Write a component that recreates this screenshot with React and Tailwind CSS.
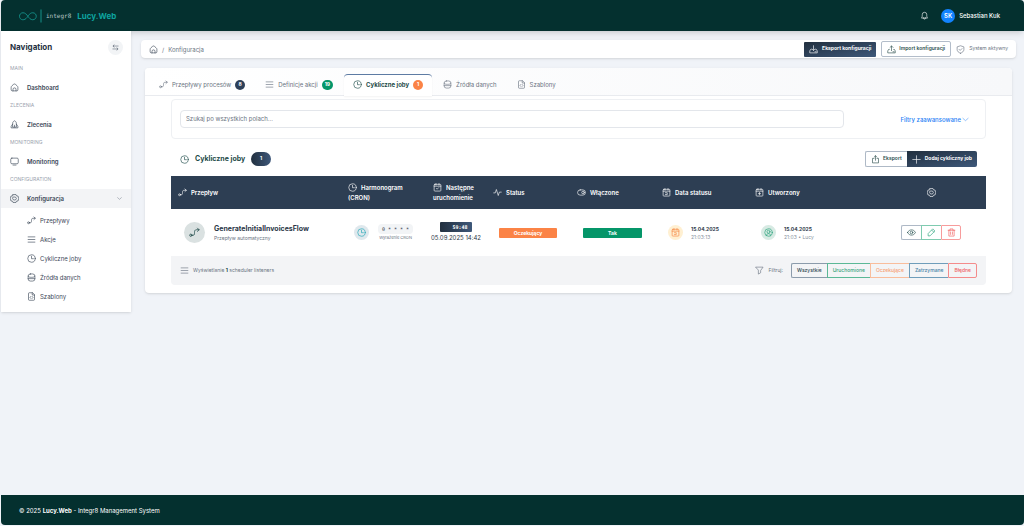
import { useState } from 'react';

const ICONS = {
  home: (
    <>
      <path d="M3 11.5C3 9.5 4 8.4 5.4 7.2l4.4-3.8c1.4-1.1 3-1.1 4.4 0l4.4 3.8C20 8.4 21 9.500 21 11.500V18a3 3 0 0 1-3 3H6a3 3 0 0 1-3-3z" />
      <path d="M8 21v-4a4 4 0 0 1 8 0v4" />
    </>
  ),
  flow: (
    <>
      <circle cx="4" cy="18" r="2.500" />
      <path d="M6.500 18H9c3 0 3-2.500 3-6s1-6 4-6h6" />
      <path d="M18.500 2.500 22 6l-3.500 3.500" />
    </>
  ),
  rocket: (
    <>
      <path d="M7 18V9c0-3 2-5.500 5-7 3 1.500 5 4 5 7v9z" />
      <path d="M7 11l-4 6v4h18v-4l-4-6M12 14v4" />
    </>
  ),
  monitor: (
    <>
      <rect x="2" y="3" width="20" height="15" rx="3" />
      <path d="M8 21.500h8" />
    </>
  ),
  gear: (
    <>
      <path d="M8 1.500h8l1.500 3.500 4 .5L23 12l-1.500 6.500-4 .5L16 22.500H8L6.500 19l-4-.5L1 12l1.500-6.500 4-.5z" />
      <path d="m9.500 8h5l2.500 4-2.500 4h-5L7 12z" />
    </>
  ),
  menu: <path d="M3 5h18M3 12h18M3 19h18" />,
  clock: (
    <>
      <circle cx="12" cy="12" r="10" />
      <path d="M12 6v6.500h5" />
    </>
  ),
  database: (
    <>
      <rect x="3" y="2.500" width="18" height="19" rx="6" />
      <path d="M3 8.500c1 2.500 4 3 9 3s8-.5 9-3M3 15h18" />
    </>
  ),
  file: (
    <>
      <path d="M14 2H6a2 2 0 0 0-2 2v16a2 2 0 0 0 2 2h12a2 2 0 0 0 2-2V8z" />
      <path d="M14 2v6h6M10 12l-2 2.500 2 2.500M14 12l2 2.500-2 2.500" />
    </>
  ),
  chevron: <path d="m3 8 9 8 9-8" />,
  swap: <path d="M7 3 4 7l3 4M4 7h17M17 13l3 4-3 4M20 17H3" />,
  bell: (
    <>
      <path d="M4.500 18C6 16 6 14 6 9.500a6 6 0 0 1 12 0c0 4.500 0 6.500 1.500 8.500z" />
      <path d="M9.500 18v1a2.500 2.500 0 0 0 5 0v-1" />
    </>
  ),
  download: (
    <>
      <path d="M12 2v12M8 10.500l4 4 4-4" />
      <path d="M6 12H4l-2 4v5h20v-5l-2-4h-2M16 18h3" />
    </>
  ),
  upload: (
    <>
      <path d="M12 15V3M8 6.500l4-4 4 4" />
      <path d="M6 12H4l-2 4v5h20v-5l-2-4h-2M16 18h3" />
    </>
  ),
  share: (
    <>
      <path d="M12 14V2M8.500 5.500l3.500-3.500 3.500 3.500" />
      <path d="M8 9H4v12h16V9h-4" />
    </>
  ),
  shield: (
    <>
      <path d="M12 22c5-2 9-5 9-10V5l-9-3-9 3v7c0 5 4 8 9 10z" />
      <path d="m8 11.500 3 3 5-5" />
    </>
  ),
  calendar: (
    <>
      <rect x="3" y="3.500" width="18" height="18" rx="2" />
      <path d="M3 8.500h18M8 1.500v4M16 1.500v4M9 14.500l2 2 4-4" />
    </>
  ),
  calendarDay: (
    <>
      <rect x="3" y="3.500" width="18" height="18" rx="2" />
      <path d="M3 8.500h18M8 1.500v4M16 1.500v4M9 12.500h5v5H9" />
    </>
  ),
  calendarAdd: (
    <>
      <rect x="3" y="3.500" width="18" height="18" rx="2" />
      <path d="M3 8.500h18M8 1.500v4M16 1.500v4M12 12v6M9 15h6" />
    </>
  ),
  pulse: <path d="M2 13h4l3-9 5 16 3-9h5" />,
  toggle: (
    <>
      <rect x="1.500" y="5" width="21" height="14" rx="7" />
      <circle cx="16" cy="12" r="3.500" />
    </>
  ),
  user: (
    <>
      <circle cx="12" cy="12" r="10" />
      <circle cx="12" cy="10" r="4" />
      <path d="M7 20v-1c0-2.500 2-4 5-4s5 1.500 5 4v1" />
    </>
  ),
  eye: (
    <>
      <path d="M1.500 12C4 7 8 5 12 5s8 2 10.500 7C20 17 16 19 12 19S4 17 1.500 12z" />
      <circle cx="12" cy="12" r="3.500" />
    </>
  ),
  pencil: <path d="m16 3 5 5L8 21H3v-5zM13 6l5 5" />,
  trash: <path d="M3 6h18M8 6V2.500h8V6M5 6v15.500h14V6M9.500 10.500v6.500M14.500 10.500v6.500" />,
  funnel: <path d="M2.500 3h19L15 12v6l-6 3.500V12z" />,
  plus: <path d="M12 2v20M2 12h20" />,
};

function Icon({ name, className = 'size-[9px]' }) {
  return (
    <svg
      viewBox="0 0 24 24"
      fill="none"
      stroke="currentColor"
      strokeWidth="1.700"
      strokeLinecap="round"
      strokeLinejoin="round"
      className={`shrink-0 ${className}`}
      aria-hidden="true"
    >
      {ICONS[name]}
    </svg>
  );
}

const NAV = [
  { section: 'MAIN', icon: 'home', label: 'Dashboard' },
  { section: 'ZLECENIA', icon: 'rocket', label: 'Zlecenia' },
  { section: 'MONITORING', icon: 'monitor', label: 'Monitoring' },
  { section: 'CONFIGURATION', icon: 'gear', label: 'Konfiguracja', open: true },
];

const SUBNAV = [
  { icon: 'flow', label: 'Przepływy' },
  { icon: 'menu', label: 'Akcje' },
  { icon: 'clock', label: 'Cykliczne joby' },
  { icon: 'database', label: 'Źródła danych' },
  { icon: 'file', label: 'Szablony' },
];

const TABS = [
  { icon: 'flow', label: 'Przepływy procesów', count: 8, badge: 'bg-[#2d4059]' },
  { icon: 'menu', label: 'Definicje akcji', count: 19, badge: 'bg-[#059669]' },
  { icon: 'clock', label: 'Cykliczne joby', count: 1, badge: 'bg-[#fb8346]' },
  { icon: 'database', label: 'Źródła danych' },
  { icon: 'file', label: 'Szablony' },
];

const COLUMNS = [
  { icon: 'flow', label: 'Przepływ', width: 'w-[170px]' },
  { icon: 'clock', label: 'Harmonogram (CRON)', width: 'w-[85px]' },
  { icon: 'calendar', label: 'Następne uruchomienie', width: 'w-[60px]' },
  { icon: 'pulse', label: 'Status', width: 'w-[84px]' },
  { icon: 'toggle', label: 'Włączone', width: 'w-[85px]' },
  { icon: 'calendarDay', label: 'Data statusu', width: 'w-[93px]' },
  { icon: 'calendarAdd', label: 'Utworzony', width: 'w-[128px]' },
];

const FILTERS = [
  { label: 'Wszystkie', style: 'border-[#8b9bab] text-[#2f4650]' },
  { label: 'Uruchomione', style: 'border-[#5bb896] text-[#35a37c]' },
  { label: 'Oczekujące', style: 'border-[#f9bd9c] text-[#f7a073]' },
  { label: 'Zatrzymane', style: 'border-[#6f9dba] text-[#4681a6]' },
  { label: 'Błędne', style: 'border-[#f48b8b] text-[#ef6161]' },
];

function Header() {
  return (
    <header className="flex h-[31px] items-center justify-between rounded-t bg-[#04302f] pr-6 pl-[18px] shadow-md">
      <a href="#" className="flex items-center">
        <svg viewBox="0 0 54 32" className="h-4 w-[27px]" fill="none" aria-hidden="true">
          <path
            d="M12 22.500c-1.500.7-3 1-4.500 1C3.500 23.500 1 20 1 16.500S3.500 9.500 8 9.500c9 0 10.500 14 19.500 14 4.500 0 7-3.500 7-7s-2.500-7-7-7c-8 0-9.500 10-15.500 13"
            stroke="#14918a"
            strokeWidth="1.800"
          />
          <path d="M44 3v26" stroke="#14918a" strokeWidth="2" />
        </svg>
        <span className="font-['DejaVu_Sans_Mono'] text-[6px] text-[#b5c4c4]">integr8</span>
        <span className="ml-1.5 text-[8px] font-bold text-[#0ea5a0]">Lucy.Web</span>
      </a>
      <div className="flex items-center gap-3">
        <button aria-label="Powiadomienia" className="text-white">
          <Icon name="bell" />
        </button>
        <button className="flex items-center gap-1 text-[6px] font-medium text-white">
          <span className="flex size-3.5 items-center justify-center rounded-full bg-[#1283ff] font-semibold">
            SK
          </span>
          Sebastian Kuk
        </button>
      </div>
    </header>
  );
}

function Sidebar() {
  return (
    <aside className="w-[130px] shrink-0 self-start bg-white pb-[6px] text-[#3c4858] shadow-sm">
      <div className="flex h-8 items-center justify-between pr-2 pl-[9px]">
        <h2 className="text-[8px] font-bold text-[#253142]">Navigation</h2>
        <button aria-label="Zwiń menu" className="flex size-[15px] items-center justify-center rounded-full bg-[#f2f4f6]">
          <Icon name="swap" className="size-[7px]" />
        </button>
      </div>
      <nav className="-mt-[3px]">
        {NAV.map((item) => (
          <div key={item.label}>
            <div className="flex h-[18px] items-center px-[9px] text-[5px] text-[#9ba3ae]">
              {item.section}
            </div>
            <a
              href="#"
              className={`flex h-[19px] items-center gap-2 px-[9px] text-[6px] font-semibold ${item.open ? 'bg-[#f3f4f6]' : ''}`}
            >
              <Icon name={item.icon} />
              <span className="grow">{item.label}</span>
              {item.open && <Icon name="chevron" className="size-[5px]" />}
            </a>
          </div>
        ))}
        <ul className="pt-[3px]">
          {SUBNAV.map((item) => (
            <li key={item.label}>
              <a href="#" className="flex h-[19px] items-center gap-1 pl-[26px] text-[6px]">
                <Icon name={item.icon} />
                {item.label}
              </a>
            </li>
          ))}
        </ul>
      </nav>
    </aside>
  );
}

function Breadcrumb() {
  return (
    <div className="flex h-[18px] items-center justify-between rounded-sm bg-white px-2 text-[#6b7482] shadow-sm">
      <nav aria-label="Breadcrumb" className="flex items-center gap-1 text-[6px]">
        <a href="#" aria-label="Dashboard" className="text-[#3c4858]">
          <Icon name="home" />
        </a>
        <span>/</span>
        <span>Konfiguracja</span>
      </nav>
      <div className="flex items-center gap-[5px] text-[5px]">
        <button className="flex h-[15px] items-center gap-1 rounded-[1px] bg-linear-to-br from-[#22303f] to-[#3e587a] px-[5px] font-bold text-white">
          <Icon name="download" />
          Eksport konfiguracji
        </button>
        <button className="flex h-4 items-center gap-[3px] rounded-[2px] border border-[#b3bdca] px-[5px] font-semibold text-[#2c4f4d]">
          <Icon name="upload" />
          Import konfiguracji
        </button>
        <span className="flex items-center gap-1">
          <Icon name="shield" />
          System aktywny
        </span>
      </div>
    </div>
  );
}

function Tabs({ active, onChange }) {
  return (
    <div role="tablist" className="flex h-7 items-end gap-0.5 rounded-t border-b border-[#e9ebef] bg-linear-to-r from-white to-[#f7f8fa] pl-[5px]">
      {TABS.map((tab) => (
        <button
          key={tab.label}
          role="tab"
          aria-selected={active === tab.label}
          onClick={() => onChange(tab.label)}
          className={`-mb-px flex h-[22px] items-center gap-1 rounded-t border-t-[1px] px-[9px] pb-0.5 text-[6px] ${
            active === tab.label
              ? 'border-[#5d7ba3] bg-white font-bold text-[#1d4a48] shadow-xs'
              : 'border-transparent text-[#6b7482]'
          }`}
        >
          <Icon name={tab.icon} />
          {tab.label}
          {tab.count && (
            <span className={`flex h-[10px] min-w-[10px] items-center justify-center rounded-full px-[3px] text-[5px] font-bold text-white ${tab.badge}`}>
              {tab.count}
            </span>
          )}
        </button>
      ))}
    </div>
  );
}

function SearchBar() {
  return (
    <div className="flex h-10 items-center rounded border border-[#eef0f3] px-2">
      <input
        type="search"
        aria-label="Szukaj po wszystkich polach"
        placeholder="Szukaj po wszystkich polach..."
        className="h-[18px] w-5/6 rounded-sm border border-[#e3e6eb] px-[5px] pb-0.5 text-[6px] placeholder:text-[#6b7482]"
      />
      <button className="flex grow items-center justify-end gap-px pr-2 text-[6px] font-medium text-[#2680f5]">
        Filtry zaawansowane
        <Icon name="chevron" className="size-[7px]" />
      </button>
    </div>
  );
}

function JobsTable() {
  return (
    <table className="w-full table-fixed text-left">
      <thead className="bg-[#2d3e53] text-[6px] text-white">
        <tr className="h-[33px]">
          {COLUMNS.map((col) => (
            <th key={col.label} className={`px-[7px] leading-[10px] font-semibold ${col.width}`}>
              <Icon name={col.icon} className="mr-1 inline size-[9px] align-[-2px]" />
              {col.label}
            </th>
          ))}
          <th aria-label="Akcje" className="w-[110px]">
            <Icon name="gear" className="mx-auto size-[9px]" />
          </th>
        </tr>
      </thead>
      <tbody>
        <tr className="h-[47px] bg-white text-[5px] text-[#2c3848]">
          <td className="pl-[13px]">
            <div className="flex items-center gap-[9px]">
              <span className="flex size-[21px] items-center justify-center rounded-full bg-[#dae1e1] text-[#1d4a48]">
                <Icon name="flow" className="size-[11px]" />
              </span>
              <div>
                <div className="text-[7px] leading-[10px] font-bold">GenerateInitialInvoicesFlow</div>
                <div className="leading-2 text-[#6b7482]">Przepływ automatyczny</div>
              </div>
            </div>
          </td>
          <td className="pl-[13px]">
            <div className="flex items-center gap-[9px]">
              <span className="flex size-[15px] shrink-0 items-center justify-center rounded-full bg-[#dfe8ed] text-[#1da5b5]">
                <Icon name="clock" />
              </span>
              <div className="text-center whitespace-nowrap">
                <div className="rounded-sm bg-[#f2f4f6] px-1 font-['DejaVu_Sans_Mono'] text-[5px] leading-[10px]">0 * * * *</div>
                <div className="text-[4px] leading-2 text-[#6b7482]">Wyrażenie CRON</div>
              </div>
            </div>
          </td>
          <td>
            <div className="flex flex-col items-center whitespace-nowrap">
              <span className="rounded-[1px] bg-linear-to-r from-[#22303f] to-[#3e587a] pr-1 pl-3 font-['DejaVu_Sans_Mono'] leading-[10px] font-bold text-white">
                59:48
              </span>
              <span className="text-[6px] leading-3">05.09.2025 14:42</span>
            </div>
          </td>
          <td className="px-[13px] text-center font-bold text-white">
            <div className="rounded-[1px] bg-[#fb8346] leading-[10px]">Oczekujący</div>
          </td>
          <td className="px-[13px] text-center font-bold text-white">
            <div className="rounded-[1px] bg-[#059669] leading-[10px]">Tak</div>
          </td>
          <td className="pl-[13px]">
            <div className="flex items-center gap-2">
              <span className="flex size-[15px] items-center justify-center rounded-full bg-[#fff0d2] text-[#f5843f]">
                <Icon name="calendarDay" />
              </span>
              <div>
                <div className="leading-2 font-bold">15.04.2025</div>
                <div className="leading-2 text-[#8a93a0]">21:03:13</div>
              </div>
            </div>
          </td>
          <td className="pl-[13px]">
            <div className="flex items-center gap-2">
              <span className="flex size-[15px] items-center justify-center rounded-full bg-[#d7eae3] text-[#22a078]">
                <Icon name="user" />
              </span>
              <div>
                <div className="leading-2 font-bold">15.04.2025</div>
                <div className="leading-2 text-[#8a93a0]">21:03 • Lucy</div>
              </div>
            </div>
          </td>
          <td>
            <div className="flex justify-center">
              <button aria-label="Podgląd" className="flex h-[15px] w-5 items-center justify-center rounded-l-[2px] border border-r-0 border-[#aeb9c6] text-[#1d4a48]">
                <Icon name="eye" />
              </button>
              <button aria-label="Edytuj" className="flex h-[15px] w-5 items-center justify-center border border-r-0 border-[#7fcbb0] text-[#22a078]">
                <Icon name="pencil" />
              </button>
              <button aria-label="Usuń" className="flex h-[15px] w-5 items-center justify-center rounded-r-[2px] border border-[#f79c9c] text-[#ef5a5a]">
                <Icon name="trash" />
              </button>
            </div>
          </td>
        </tr>
      </tbody>
    </table>
  );
}

function JobsPanel() {
  return (
    <section className="mt-[3px] overflow-hidden rounded">
      <div className="flex h-[34px] items-center justify-between px-[9px]">
        <div className="flex items-center gap-1.5 text-[#1d4a48]">
          <Icon name="clock" />
          <h1 className="text-[7px] font-bold">Cykliczne joby</h1>
          <span className="flex h-3.5 w-5 items-center justify-center rounded-full bg-linear-to-r from-[#22303f] to-[#3e587a] text-[5px] font-bold text-white">
            1
          </span>
        </div>
        <div className="flex text-[5px]">
          <button className="flex h-4 items-center gap-[3px] rounded-l-[2px] border border-r-0 border-[#aeb9c6] px-[5px] font-semibold text-[#2c4f4d]">
            <Icon name="share" />
            Eksport
          </button>
          <button className="flex h-4 items-center gap-1 rounded-r-[2px] bg-linear-to-br from-[#22303f] to-[#3e587a] px-[5px] font-bold text-white">
            <Icon name="plus" />
            Dodaj cykliczny job
          </button>
        </div>
      </div>
      <JobsTable />
      <div className="flex h-[29px] items-center justify-between bg-[#f3f4f6] px-[9px] text-[5px] text-[#6b7482]">
        <div className="flex items-center gap-1">
          <Icon name="menu" />
          <span>
            Wyświetlanie <b className="text-[#1d4a48]">1</b> scheduler listeners
          </span>
        </div>
        <div className="flex items-center gap-1">
          <Icon name="funnel" />
          Filtruj:
          <div className="ml-1 flex font-medium">
            {FILTERS.map((filter) => (
              <button
                key={filter.label}
                className={`h-[15px] border border-r-0 px-[5px] first:rounded-l-[2px] last:rounded-r-[2px] last:border-r ${filter.style}`}
              >
                {filter.label}
              </button>
            ))}
          </div>
        </div>
      </div>
    </section>
  );
}

function App() {
  const [tab, setTab] = useState('Cykliczne joby');

  return (
    <div className="flex min-h-screen flex-col bg-[#f0f3f8] pb-px pl-px font-['Inter',sans-serif]">
      <Header />
      <div className="flex grow">
        <Sidebar />
        <main className="min-w-0 grow pt-[9px] pr-2 pl-[10px]">
          <Breadcrumb />
          <div className="mx-1 mt-[10px] rounded bg-white pb-2 shadow-sm">
            <Tabs active={tab} onChange={setTab} />
            <div className="px-[26px] pt-[3px]">
              <SearchBar />
              <JobsPanel />
            </div>
          </div>
        </main>
      </div>
      <footer className="flex h-[30px] items-center rounded-b bg-[#04302f] px-[18px] text-[6px] text-white">
        <p>
          © 2025 <b>Lucy.Web</b> - Integr8 Management System
        </p>
      </footer>
    </div>
  );
}

export default App;
